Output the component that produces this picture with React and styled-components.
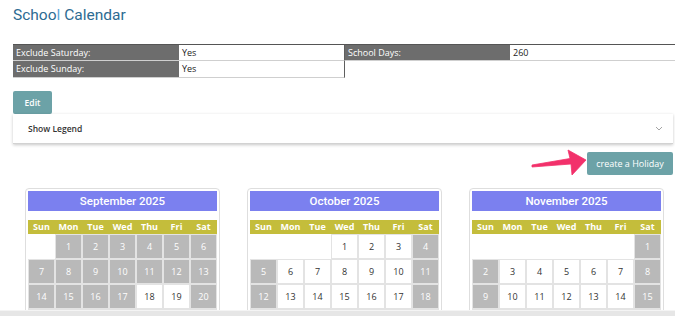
import React from "react";
import styled, { createGlobalStyle } from "styled-components";

const Global = createGlobalStyle`
  html, body { margin: 0; padding: 0; background: #fff; overflow: hidden; }
  body { width: 675px; height: 316px; font-family: "Open Sans", "Noto Sans", sans-serif; }
  * { box-sizing: border-box; }
`;

const Page = styled.div`
  padding: 0 2px 0 13px;
  width: 675px;
`;

const Title = styled.h1`
  margin: 0;
  padding-top: 5px;
  height: 25px;
  font-family: Roboto, "Liberation Sans", sans-serif;
  font-weight: 400;
  font-size: 15.5px;
  line-height: 20px;
  color: #2d6b92;
  span { color: #5ea7d8; }
`;

const Info = styled.div`
  margin-top: 19px;
  display: grid;
  grid-template-columns: 166px 166px 165px 170px;
  font-size: 9px;
`;

const Cell = styled.div`
  height: 17px;
  line-height: 16px;
  padding-left: 3px;
  border-bottom: 1px solid #cfcfcf;
  border-top: ${(p) => (p.$first ? "1px solid #555" : "none")};
  background: ${(p) => (p.$label ? "#6d6d6d" : "#fff")};
  color: ${(p) => (p.$label ? "#fff" : "#222")};
  border-right: ${(p) => (p.$label ? "none" : "1px solid #5e5e5e")};
  white-space: nowrap;
  overflow: hidden;
`;

const Edit = styled.button`
  margin-top: 13px;
  display: block;
  width: 39px;
  height: 23px;
  border: none;
  border-radius: 2px;
  background: #6ca2a7;
  color: #fff;
  font-family: "Open Sans", sans-serif;
  font-size: 8.5px;
  font-weight: 600;
  padding: 0;
`;

const Legend = styled.div`
  height: 30px;
  background: #fff;
  box-shadow: 0 1px 3px rgba(0, 0, 0, 0.22);
  border-bottom: 1px solid #d2d2d2;
  display: flex;
  align-items: center;
  justify-content: space-between;
  padding: 0 10px 0 15px;
  font-size: 8.5px;
  font-weight: 600;
  color: #333;
`;

const ActionRow = styled.div`
  margin-top: 4px;
  display: flex;
  justify-content: flex-end;
  align-items: center;
`;

const Create = styled.button`
  width: 86px;
  height: 23px;
  border: none;
  border-radius: 2px;
  background: #6ca2a7;
  color: #fff;
  font-family: "Open Sans", sans-serif;
  font-size: 9px;
  padding: 0;
`;

const Calendars = styled.div`
  margin-top: 10px;
  padding-left: 12px;
  display: flex;
  gap: 27px;
`;

const Card = styled.div`
  width: 195px;
  border: 1px solid #dedede;
  border-radius: 4px;
  padding: 2px;
  background: #fff;
`;

const MonthHead = styled.div`
  height: 20px;
  background: #7b80ef;
  color: #fff;
  text-align: center;
  font-family: Roboto, sans-serif;
  font-weight: 500;
  font-size: 11.5px;
  line-height: 20px;
`;

const Weekdays = styled.div`
  margin-top: 9px;
  height: 14px;
  background: #c4bd3b;
  display: grid;
  grid-template-columns: repeat(7, 27px);
  color: #fff;
  font-weight: 700;
  font-size: 9px;
  line-height: 14px;
  text-align: center;
`;

const Days = styled.div`
  display: grid;
  grid-template-columns: repeat(7, 27px);
  grid-auto-rows: 25px;
`;

const Day = styled.div`
  display: flex;
  align-items: center;
  justify-content: center;
  font-size: 9px;
  border: ${(p) => (p.$empty ? "none" : "1px solid #e3e3e3")};
  background: ${(p) => (p.$off ? "#b9b9b9" : "#fff")};
  color: ${(p) => (p.$off ? "#fff" : "#333")};
`;

const ScrollBar = styled.div`
  position: fixed;
  left: 0;
  right: 0;
  bottom: 0;
  height: 6px;
  background: #e6e6e6;
  border-top: 1px solid #f4f4f4;
`;

const months = [
  { name: "September 2025", start: 1, len: 30, off: (d, w) => d <= 17 || w === 0 || w === 6 },
  { name: "October 2025", start: 3, len: 31, off: (d, w) => w === 0 || w === 6 },
  { name: "November 2025", start: 6, len: 30, off: (d, w) => w === 0 || w === 6 },
];

const wd = ["Sun", "Mon", "Tue", "Wed", "Thu", "Fri", "Sat"];

function Month({ m }) {
  const cells = [];
  for (let i = 0; i < m.start; i++) cells.push(<Day key={"e" + i} $empty />);
  for (let d = 1; d <= m.len; d++) {
    const w = (m.start + d - 1) % 7;
    cells.push(
      <Day key={d} $off={m.off(d, w)}>
        {d}
      </Day>
    );
  }
  return (
    <Card>
      <MonthHead>{m.name}</MonthHead>
      <Weekdays>
        {wd.map((w) => (
          <div key={w}>{w}</div>
        ))}
      </Weekdays>
      <Days>{cells}</Days>
    </Card>
  );
}

export default function App() {
  return (
    <>
      <Global />
      <Page>
        <Title>
          Schoo<span>l</span> Calendar
        </Title>
        <Info>
          <Cell $label $first>Exclude Saturday:</Cell>
          <Cell $first>Yes</Cell>
          <Cell $label $first>School Days:</Cell>
          <Cell $first>260</Cell>
          <Cell $label>Exclude Sunday:</Cell>
          <Cell>Yes</Cell>
        </Info>
        <Edit>Edit</Edit>
        <Legend>
          <span>Show Legend</span>
          <svg width="8" height="5" viewBox="0 0 8 5">
            <path d="M1 1 L4 4 L7 1" fill="none" stroke="#9a9a9a" strokeWidth="0.9" />
          </svg>
        </Legend>
        <ActionRow>
          <svg width="57" height="30" viewBox="0 0 57 30">
            <polygon
              points="2,17 40,10.5 38,2 56,12 42,27 41,16 2,19"
              fill="#f2316b"
              stroke="#f2316b"
              strokeWidth="0.8"
              strokeLinejoin="round"
            />
          </svg>
          <Create>create a Holiday</Create>
        </ActionRow>
        <Calendars>
          {months.map((m) => (
            <Month key={m.name} m={m} />
          ))}
        </Calendars>
      </Page>
      <ScrollBar />
    </>
  );
}
